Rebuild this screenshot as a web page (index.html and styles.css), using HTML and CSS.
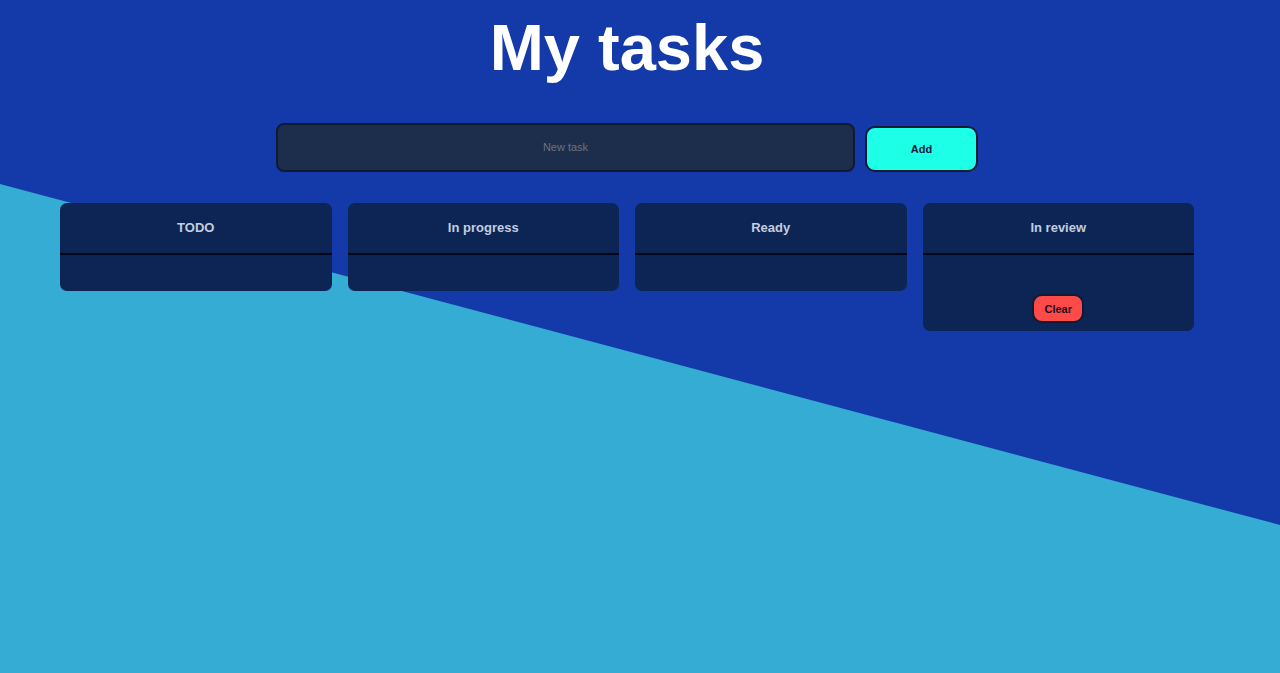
FILE: index.html
```html
<!DOCTYPE html>
<html lang="en">
<head>
<meta charset="utf-8">
<title>My tasks</title>
<link rel="stylesheet" href="styles.css">
</head>
<body>
<div class="bg"></div>
<main class="app">
  <h1 class="title">My tasks</h1>
  <form class="new-task" onsubmit="return false">
    <input class="task-input" type="text" placeholder="New task">
    <button class="add-btn" type="submit">Add</button>
  </form>
  <section class="board">
    <div class="column">
      <div class="column-head">TODO</div>
      <div class="column-body"></div>
    </div>
    <div class="column">
      <div class="column-head">In progress</div>
      <div class="column-body"></div>
    </div>
    <div class="column">
      <div class="column-head">Ready</div>
      <div class="column-body"></div>
    </div>
    <div class="column">
      <div class="column-head">In review</div>
      <div class="column-body with-action">
        <button class="clear-btn" type="button">Clear</button>
      </div>
    </div>
  </section>
</main>
</body>
</html>
```

FILE: styles.css
```css
* { box-sizing: border-box; }

html, body {
  margin: 0;
  height: 100%;
}

body {
  font-family: "Liberation Sans", Arial, sans-serif;
  background: #1439a8;
  position: relative;
  overflow: hidden;
}

.bg {
  position: absolute;
  inset: 0;
  background: #34acd4;
  clip-path: polygon(0 184px, 1280px 525px, 1280px 100%, 0 100%);
  z-index: 0;
}

.app {
  position: relative;
  z-index: 1;
  width: 1254px;
  display: flex;
  flex-direction: column;
  align-items: center;
}

.title {
  margin: 10px 0 0;
  font-size: 65px;
  line-height: 76px;
  font-weight: 700;
  color: #ffffff;
}

.new-task {
  margin-top: 37px;
  display: flex;
  align-items: center;
  gap: 10px;
}

.task-input {
  width: 579px;
  height: 49px;
  background: #1d2e4d;
  border: 2px solid #0f1a35;
  border-radius: 8px;
  color: #c8d0e0;
  font-family: "Liberation Sans", Arial, sans-serif;
  font-size: 11px;
  text-align: center;
  outline: none;
  padding: 0 10px 2px;
}

.task-input::placeholder {
  color: #6b7280;
}

.add-btn {
  width: 113px;
  height: 46px;
  margin-top: 3px;
  background: #1effe8;
  border: 2px solid #0f1a35;
  border-radius: 10px;
  color: #0f1a35;
  font-family: "Liberation Sans", Arial, sans-serif;
  font-size: 11px;
  font-weight: 700;
}

.board {
  margin-top: 31px;
  display: flex;
  align-items: flex-start;
  gap: 16px;
}

.column {
  width: 271.5px;
  background: #0d2554;
  border-radius: 7px;
  overflow: hidden;
}

.column-head {
  height: 52px;
  border-bottom: 2px solid #020817;
  color: #c3cde0;
  font-size: 13px;
  font-weight: 700;
  text-align: center;
  padding-top: 17px;
}

.column-body {
  height: 36px;
}

.column-body.with-action {
  height: 76px;
  display: flex;
  justify-content: center;
  align-items: flex-start;
  padding-top: 39px;
}

.clear-btn {
  width: 52px;
  height: 29px;
  background: #ff4a4a;
  border: 2px solid #0f1a35;
  border-radius: 10px;
  color: #1a0f1f;
  font-family: "Liberation Sans", Arial, sans-serif;
  font-size: 11px;
  font-weight: 700;
  padding: 0;
}
```
